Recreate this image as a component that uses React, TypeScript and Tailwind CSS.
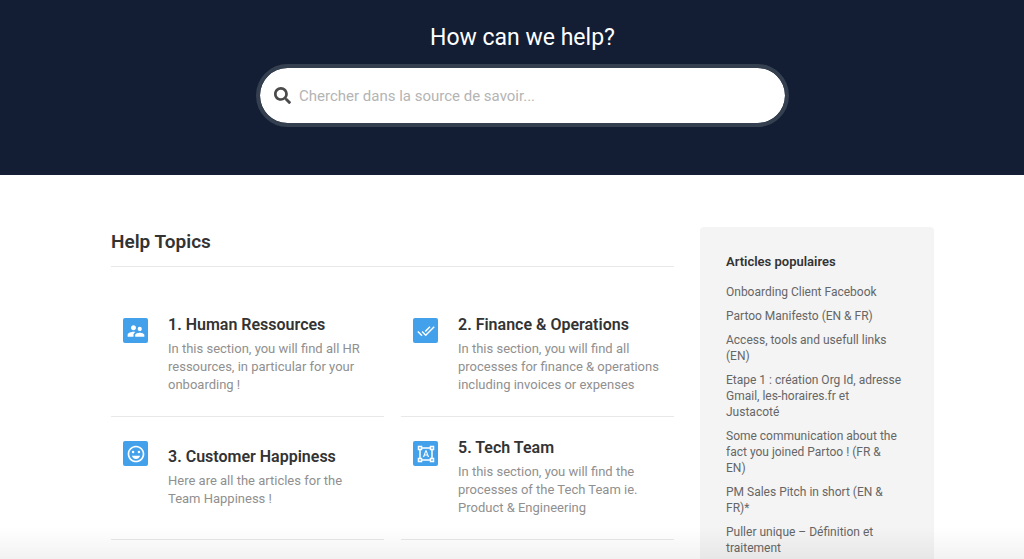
import React from 'react';
import type { IconType } from 'react-icons';
import { FaSearch } from 'react-icons/fa';
import {
  MdDoneAll,
  MdFormatShapes,
  MdOutlineEmojiEmotions,
  MdSupervisorAccount,
} from 'react-icons/md';

interface Topic {
  title: string;
  description: string;
  icon: IconType;
  iconSize: string;
  // Short descriptions sit a little lower in their cell
  short?: boolean;
}

const topics: Topic[] = [
  {
    title: '1. Human Ressources',
    description:
      'In this section, you will find all HR ressources, in particular for your onboarding !',
    icon: MdSupervisorAccount,
    iconSize: 'size-5',
  },
  {
    title: '2. Finance & Operations',
    description:
      'In this section, you will find all processes for finance & operations including invoices or expenses',
    icon: MdDoneAll,
    iconSize: 'size-[18px]',
  },
  {
    title: '3. Customer Happiness',
    description: 'Here are all the articles for the Team Happiness !',
    icon: MdOutlineEmojiEmotions,
    iconSize: 'size-5',
    short: true,
  },
  {
    title: '5. Tech Team',
    description:
      'In this section, you will find the processes of the Tech Team ie. Product & Engineering',
    icon: MdFormatShapes,
    iconSize: 'size-[18px]',
  },
];

const articles = [
  'Onboarding Client Facebook',
  'Partoo Manifesto (EN & FR)',
  'Access, tools and usefull links (EN)',
  'Etape 1 : création Org Id, adresse Gmail, les-horaires.fr et Justacoté',
  'Some communication about the fact you joined Partoo ! (FR & EN)',
  'PM Sales Pitch in short (EN & FR)*',
  'Puller unique – Définition et traitement',
];

const SearchHeader: React.FC = () => (
  <header className="bg-[#131d33] pt-6 pb-12 pl-[21px] text-center">
    <h1 className="text-[23px] leading-7 text-white">How can we help?</h1>
    <form
      role="search"
      className="mx-auto mt-3 flex h-[63px] w-full max-w-[533px] items-center gap-2 rounded-full border-4 border-[#343f50] bg-white bg-clip-padding px-[14px]"
    >
      <label htmlFor="search" aria-label="Chercher">
        <FaSearch className="size-[17px] text-[#4a4a4a]" />
      </label>
      <input
        id="search"
        type="text"
        placeholder="Chercher dans la source de savoir..."
        className="min-w-0 flex-1 bg-transparent text-[15px] leading-6 text-[#333333] outline-none placeholder:text-[#b4b4b4]"
      />
    </form>
  </header>
);

const TopicCard: React.FC<{ topic: Topic }> = ({ topic }) => {
  const Icon = topic.icon;

  return (
    <a
      href="#"
      className="flex items-start gap-5 border-b border-[#e8e8e8] pt-[21px] pb-[22px] pl-3"
    >
      <span className="mt-[3px] flex size-[25px] shrink-0 items-center justify-center rounded-xs bg-[#43a1ec] text-white">
        <Icon className={topic.iconSize} />
      </span>
      <div className={topic.short ? 'pt-[9px] pr-3' : 'pr-3'}>
        <h3 className="text-base leading-5 font-semibold text-[#333333]">
          {topic.title}
        </h3>
        <p className="mt-[5px] text-[13px] leading-[18px] text-[#909090]">
          {topic.description}
        </p>
      </div>
    </a>
  );
};

const PopularArticles: React.FC = () => (
  <aside className="w-[234px] shrink-0 rounded-t bg-[#f4f4f4] pt-[25px] pr-8 pb-10 pl-[26px]">
    <h2 className="text-[13px] leading-5 font-semibold text-[#333333]">
      Articles populaires
    </h2>
    <ul className="mt-3 space-y-2">
      {articles.map((article) => (
        <li key={article} className="text-xs leading-4 text-[#666666]">
          <a href="#">{article}</a>
        </li>
      ))}
    </ul>
  </aside>
);

export default function App() {
  return (
    <div className="min-h-screen bg-white font-[Roboto,sans-serif]">
      <SearchHeader />
      <div className="pt-[52px] pl-[21px]">
        <div className="mx-auto flex w-full max-w-[823px] gap-[26px]">
          <main className="min-w-0 flex-1">
            <h2 className="border-b border-[#e8e8e8] pb-[9px] text-[19px] leading-[30px] font-semibold text-[#333333]">
              Help Topics
            </h2>
            <div className="mt-[27px] grid grid-cols-2 gap-x-[17px]">
              {topics.map((topic) => (
                <TopicCard key={topic.title} topic={topic} />
              ))}
            </div>
          </main>
          <PopularArticles />
        </div>
      </div>
      {/* Soft fade along the bottom of the window */}
      <div className="pointer-events-none fixed inset-x-0 bottom-0 h-8 bg-linear-to-b from-transparent to-black/5" />
    </div>
  );
}
